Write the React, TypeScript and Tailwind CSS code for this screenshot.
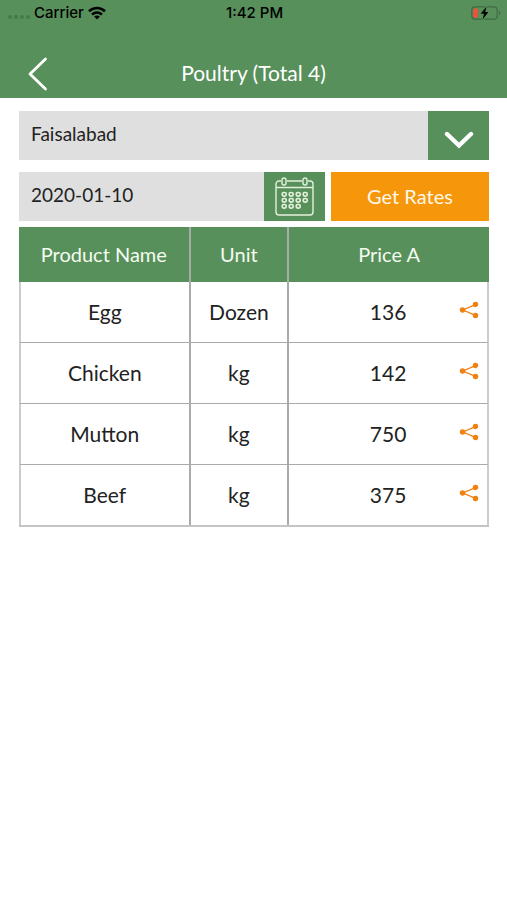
const products = [
  { name: 'Egg', unit: 'Dozen', price: 136 },
  { name: 'Chicken', unit: 'kg', price: 142 },
  { name: 'Mutton', unit: 'kg', price: 750 },
  { name: 'Beef', unit: 'kg', price: 375 },
];

function WifiIcon() {
  return (
    <svg viewBox="0 0 18 14" className="h-[14px] w-[18px]" fill="none" stroke="currentColor" strokeWidth="2.6" aria-hidden="true">
      <path d="M1 5.2C5.6 .9 12.4 .9 17 5.2" />
      <path d="M4 8.600C6.9 5.9 11.1 5.9 14 8.6" />
      <path d="M9 13.6L6.1 10.6C7.8 9.1 10.2 9.1 11.9 10.6Z" fill="currentColor" stroke="none" />
    </svg>
  );
}

function BatteryIcon() {
  return (
    <svg viewBox="0 0 30 14" className="h-[14px] w-[30px]" aria-hidden="true">
      <rect x=".8" y=".8" width="25.4" height="12.4" rx="3.4" fill="none" stroke="#3f6a43" strokeWidth="1.2" />
      <path d="M28 4.8c1.9.9 1.9 3.5 0 4.4z" fill="#3f6a43" />
      <rect x="2.4" y="2.4" width="4.4" height="9.2" rx="1.4" fill="#fb4b3c" />
      <path d="M15.6 .4L9.6 7.8h3.4L11.6 13.4L17.4 6H14.2z" fill="#000" stroke="#58905b" strokeWidth="2" paintOrder="stroke" />
    </svg>
  );
}

function CalendarIcon() {
  const dots = [
    [9, 17], [16, 17], [23, 17], [30, 17],
    [9, 23], [16, 23], [23, 23], [30, 23],
    [9, 29], [16, 29], [23, 29],
  ];

  return (
    <svg viewBox="0 0 39 39" className="size-[39px]" fill="none" stroke="#e4f0dc" strokeWidth="1.4" aria-hidden="true">
      <path d="M6 4H4a3 3 0 0 0-3 3v28a3 3 0 0 0 3 3h31a3 3 0 0 0 3-3V7a3 3 0 0 0-3-3h-2M12 4h15M1 10.5h37" />
      <rect x="7" y="1" width="4" height="7" rx="2" />
      <rect x="28" y="1" width="4" height="7" rx="2" />
      {dots.map(([x, y]) => (
        <rect key={`${x}-${y}`} x={x - 1.8} y={y - 1.5} width="4" height="3.6" rx="1.6" strokeWidth="1.7" />
      ))}
    </svg>
  );
}

function ShareIcon() {
  return (
    <svg viewBox="0 0 20 18" className="h-[18px] w-5" fill="#f08010" stroke="#f08010" strokeWidth="1.3" aria-hidden="true">
      <path d="M17 3.400L4 9l13 5.600" fill="none" />
      <circle cx="3.5" cy="9" r="2.1" />
      <circle cx="16.500" cy="3.4" r="2.1" />
      <circle cx="16.500" cy="14.6" r="2.1" />
    </svg>
  );
}

export default function App() {
  return (
    <div className="min-h-screen bg-white font-[Lato,sans-serif] text-[#222]">
      <header className="bg-[#58905b]">
        {/* Status bar */}
        <div className="grid h-[26px] grid-cols-[1fr_auto_1fr] items-center pr-1.5 pl-2 font-[Inter,sans-serif] text-[15px] text-black">
          <div className="flex items-center gap-1">
            <div className="flex gap-0.5 pt-2">
              {[0, 1, 2, 3].map(i => (
                <span key={i} className="size-1 rounded-full bg-[#477a4a]" />
              ))}
            </div>
            <span className="font-medium">Carrier</span>
            <WifiIcon />
          </div>
          <span className="font-medium">1:42 PM</span>
          <div className="flex justify-end">
            <BatteryIcon />
          </div>
        </div>

        {/* Title bar */}
        <div className="grid h-[72px] grid-cols-[1fr_auto_1fr] items-center px-7 pt-6">
          <button type="button" aria-label="Back" className="justify-self-start">
            <svg viewBox="0 0 20 34" className="h-[34px] w-5" fill="none" stroke="white" strokeWidth="2.8" strokeLinecap="round" strokeLinejoin="round" aria-hidden="true">
              <path d="M17.5 2L2 17l15.500 15" />
            </svg>
          </button>
          <h1 className="pb-0.5 text-[21px] text-white">Poultry (Total 4)</h1>
        </div>
      </header>

      <main className="pt-[13px] pr-[18px] pl-[19px]">
        <form onSubmit={e => e.preventDefault()}>
          <div className="relative h-[49px]">
            <select aria-label="City" defaultValue="Faisalabad" className="h-full w-full appearance-none rounded-none bg-[#dfdfdf] pr-16 pb-0.5 pl-3 text-[19px] outline-none">
              <option>Faisalabad</option>
            </select>
            <span className="pointer-events-none absolute inset-y-0 right-0 flex w-[61px] items-center justify-center bg-[#58905b] pt-2">
              <svg viewBox="0 0 30 18" className="h-[18px] w-[30px]" fill="none" stroke="white" strokeWidth="4.4" strokeLinecap="round" aria-hidden="true">
                <path d="M3 3l12 11.500L27 3" />
              </svg>
            </span>
          </div>

          <div className="mt-3 flex h-[49px]">
            <input aria-label="Date" defaultValue="2020-01-10" className="min-w-0 flex-1 bg-[#dfdfdf] px-3 pb-0.5 text-[19px] outline-none" />
            <button type="button" aria-label="Pick a date" className="flex w-[61px] items-center justify-center bg-[#58905b]">
              <CalendarIcon />
            </button>
            <button type="submit" className="ml-1.5 w-[158px] bg-[#f6960a] pb-0.5 text-xl text-[#fff8e8]">
              Get Rates
            </button>
          </div>
        </form>

        <table className="mt-1.5 w-full table-fixed border-separate border-spacing-0 border-b-2 border-[#c4c4c4] text-center">
          <thead>
            <tr className="h-[55px] bg-[#58905b] text-xl text-[#f4fbf0] *:pb-0.5">
              <th className="w-[36.5%] border-r-2 border-[#aaa] font-normal">Product Name</th>
              <th className="w-[21%] border-r-2 border-[#aaa] font-normal">Unit</th>
              <th className="font-normal">Price A</th>
            </tr>
          </thead>
          <tbody>
            {products.map((product, idx) => (
              <tr key={product.name} className={idx === 0 ? 'h-[60px] text-[21px]' : 'h-[61px] text-[21px] *:border-t'}>
                <td className="border-r-2 border-l-2 border-[#aaa] border-l-[#ccc]">{product.name}</td>
                <td className="border-r-2 border-[#aaa]">{product.unit}</td>
                <td className="border-r-2 border-[#aaa] border-r-[#ccc]">
                  <div className="grid grid-cols-[1fr_auto_1fr] items-center">
                    <span className="col-start-2">{product.price}</span>
                    <button type="button" aria-label={`Share ${product.name} price`} className="justify-self-end pr-2 pb-1">
                      <ShareIcon />
                    </button>
                  </div>
                </td>
              </tr>
            ))}
          </tbody>
        </table>
      </main>
    </div>
  );
}
